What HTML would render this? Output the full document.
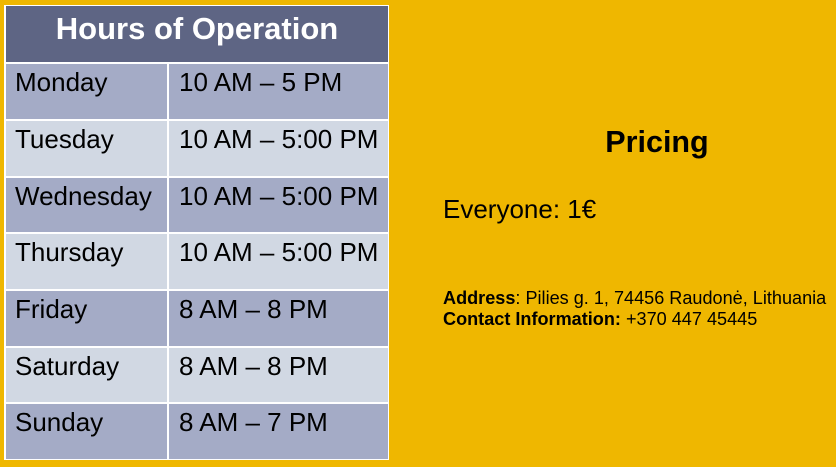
<!DOCTYPE html><html><head><style>
body{margin:0;width:836px;height:467px;background:#EFB700;position:relative;overflow:hidden;font-family:"Liberation Sans",sans-serif}
.t{position:absolute;left:4px;top:5px;width:385px;height:455px;background:#fff}
.c{position:absolute;box-sizing:border-box;font-size:26px;color:#000;padding:3px 0 0 9px;line-height:30px}
.r{padding-left:10px}
.h{background:#5E6584;color:#fff;font-weight:bold;font-size:31px;text-align:center;padding:6px 0 0 0;line-height:34px}
.o{background:#A4ABC6}.e{background:#D1D8E3}
</style></head><body>
<div class="t"></div>
<div class="c h" style="left:6px;top:6px;width:382px;height:56px">Hours of Operation</div>
<div class="c o" style="left:6px;top:64px;width:161px;height:55px">Monday</div><div class="c o r" style="left:169px;top:64px;width:219px;height:55px">10 AM – 5 PM</div>
<div class="c e" style="left:6px;top:121px;width:161px;height:55px">Tuesday</div><div class="c e r" style="left:169px;top:121px;width:219px;height:55px">10 AM – 5:00 PM</div>
<div class="c o" style="left:6px;top:178px;width:161px;height:54px">Wednesday</div><div class="c o r" style="left:169px;top:178px;width:219px;height:54px">10 AM – 5:00 PM</div>
<div class="c e" style="left:6px;top:234px;width:161px;height:55px">Thursday</div><div class="c e r" style="left:169px;top:234px;width:219px;height:55px">10 AM – 5:00 PM</div>
<div class="c o" style="left:6px;top:291px;width:161px;height:55px">Friday</div><div class="c o r" style="left:169px;top:291px;width:219px;height:55px">8 AM – 8 PM</div>
<div class="c e" style="left:6px;top:348px;width:161px;height:54px">Saturday</div><div class="c e r" style="left:169px;top:348px;width:219px;height:54px">8 AM – 8 PM</div>
<div class="c o" style="left:6px;top:404px;width:161px;height:55px">Sunday</div><div class="c o r" style="left:169px;top:404px;width:219px;height:55px">8 AM – 7 PM</div>
<div style="position:absolute;left:557px;top:125px;width:200px;text-align:center;font-weight:bold;font-size:30.5px">Pricing</div>
<div style="position:absolute;left:443px;top:194px;font-size:26px">Everyone: 1€</div>
<div style="position:absolute;left:443px;top:288px;font-size:18.1px;line-height:21px;white-space:nowrap"><b>Address</b>: Pilies g. 1, 74456 Raudonė, Lithuania<br><b>Contact Information:</b> +370 447 45445</div>
</body></html>
